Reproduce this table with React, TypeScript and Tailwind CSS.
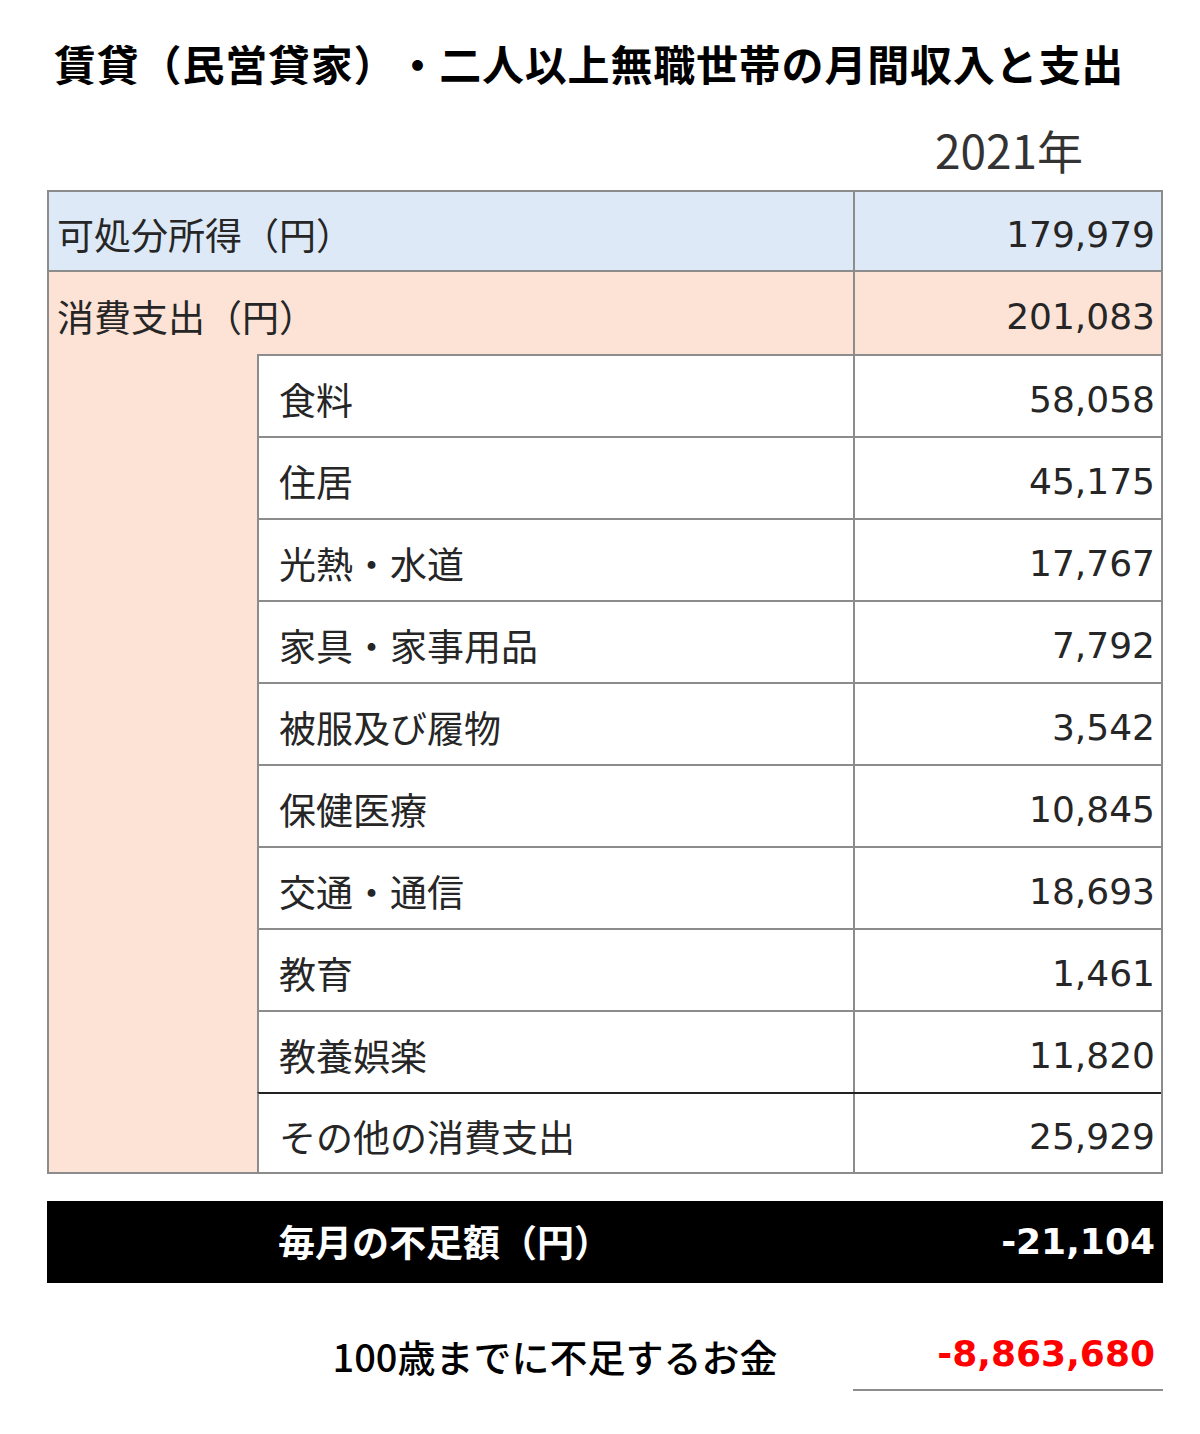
const JP = "font-['Noto_Sans_CJK_JP',sans-serif]"
const NUM = "font-['DejaVu_Sans','Noto_Sans_CJK_JP',sans-serif]"

const ITEMS = [
  { label: '食料', value: '58,058' },
  { label: '住居', value: '45,175' },
  { label: '光熱・水道', value: '17,767' },
  { label: '家具・家事用品', value: '7,792' },
  { label: '被服及び履物', value: '3,542' },
  { label: '保健医療', value: '10,845' },
  { label: '交通・通信', value: '18,693' },
  { label: '教育', value: '1,461' },
  { label: '教養娯楽', value: '11,820' },
  { label: 'その他の消費支出', value: '25,929' },
]

export default function App() {
  return (
    <div className={`w-[1200px] h-[1434px] bg-white text-[#262626] [text-spacing-trim:space-all] ${JP}`}>
      {/* タイトル */}
      <div className="h-[126px] pl-[54px] pt-[30px]">
        <h1 className="text-[42px] font-bold leading-[66px] text-black tracking-[0.8px]">
          賃貸（民営貸家）・二人以上無職世帯の月間収入と支出
        </h1>
      </div>

      <div className="ml-[47px] w-[1116px]">
        {/* 年 */}
        <div className="flex justify-end h-[64px]">
          <div className="w-[308px] text-center text-[46px] font-normal leading-[46px] text-[#333]">2021年</div>
        </div>

        {/* 表 */}
        <div className="border-2 border-[#8c8c8c]">
          <div className="flex h-[80px] bg-[#dde9f6] border-b-2 border-[#8c8c8c]">
            <div className="flex-1 flex items-center pl-[8px] pt-[8px] text-[37px] [text-spacing-trim:space-all]">
              <span>可処分所得（円）</span>
            </div>
            <div className={`w-[308px] border-l-2 border-[#8c8c8c] flex items-center justify-end pr-[6px] pt-[8px] text-[36px] ${NUM}`}>
              179,979
            </div>
          </div>

          <div className="bg-[#fce3d6]">
            <div className="flex h-[82px]">
              <div className="flex-1 flex items-center pl-[8px] pt-[8px] text-[37px] [text-spacing-trim:space-all]">
                <span>消費支出（円）</span>
              </div>
              <div className={`w-[308px] border-l-2 border-[#8c8c8c] flex items-center justify-end pr-[6px] pt-[8px] text-[36px] ${NUM}`}>
                201,083
              </div>
            </div>
            <div className="flex">
              <div className="w-[208px]" />
              <div className="flex-1">
                {ITEMS.map((it, i) => (
                  <div
                    key={it.label}
                    className={[
                      'flex bg-white border-l-2 border-t-2',
                      i === ITEMS.length - 1 ? 'h-[80px] border-t-[#222]' : 'h-[82px]',
                      'border-[#8c8c8c]',
                    ].join(' ')}
                  >
                    <div className="flex-1 flex items-center pl-[20px] pt-[8px] text-[37px]">{it.label}</div>
                    <div className={`w-[308px] border-l-2 border-[#8c8c8c] flex items-center justify-end pr-[6px] pt-[8px] text-[36px] ${NUM}`}>
                      {it.value}
                    </div>
                  </div>
                ))}
              </div>
            </div>
          </div>
        </div>

        {/* 不足額 */}
        <div className="mt-[27px] h-[82px] bg-black flex items-center text-white">
          <div className="w-[210px]" />
          <div className="flex-1 pl-[21px] text-[37px] font-bold [text-spacing-trim:space-all]">
            <span>毎月の不足額（円）</span>
          </div>
          <div className={`w-[308px] text-right pr-[8px] text-[36px] font-bold ${NUM}`}>-21,104</div>
        </div>

        {/* 100歳まで */}
        <div className="flex mt-[36px] h-[72px]">
          <div className="w-[210px]" />
          <div className="flex-1 flex items-center justify-center text-[38px] font-medium text-black">
            100歳までに不足するお金
          </div>
          <div className={`w-[310px] border-b-2 border-[#8c8c8c] flex items-center justify-end pr-[8px] text-[36px] font-bold text-[#ff0000] ${NUM}`}>
            -8,863,680
          </div>
        </div>
      </div>
    </div>
  )
}
